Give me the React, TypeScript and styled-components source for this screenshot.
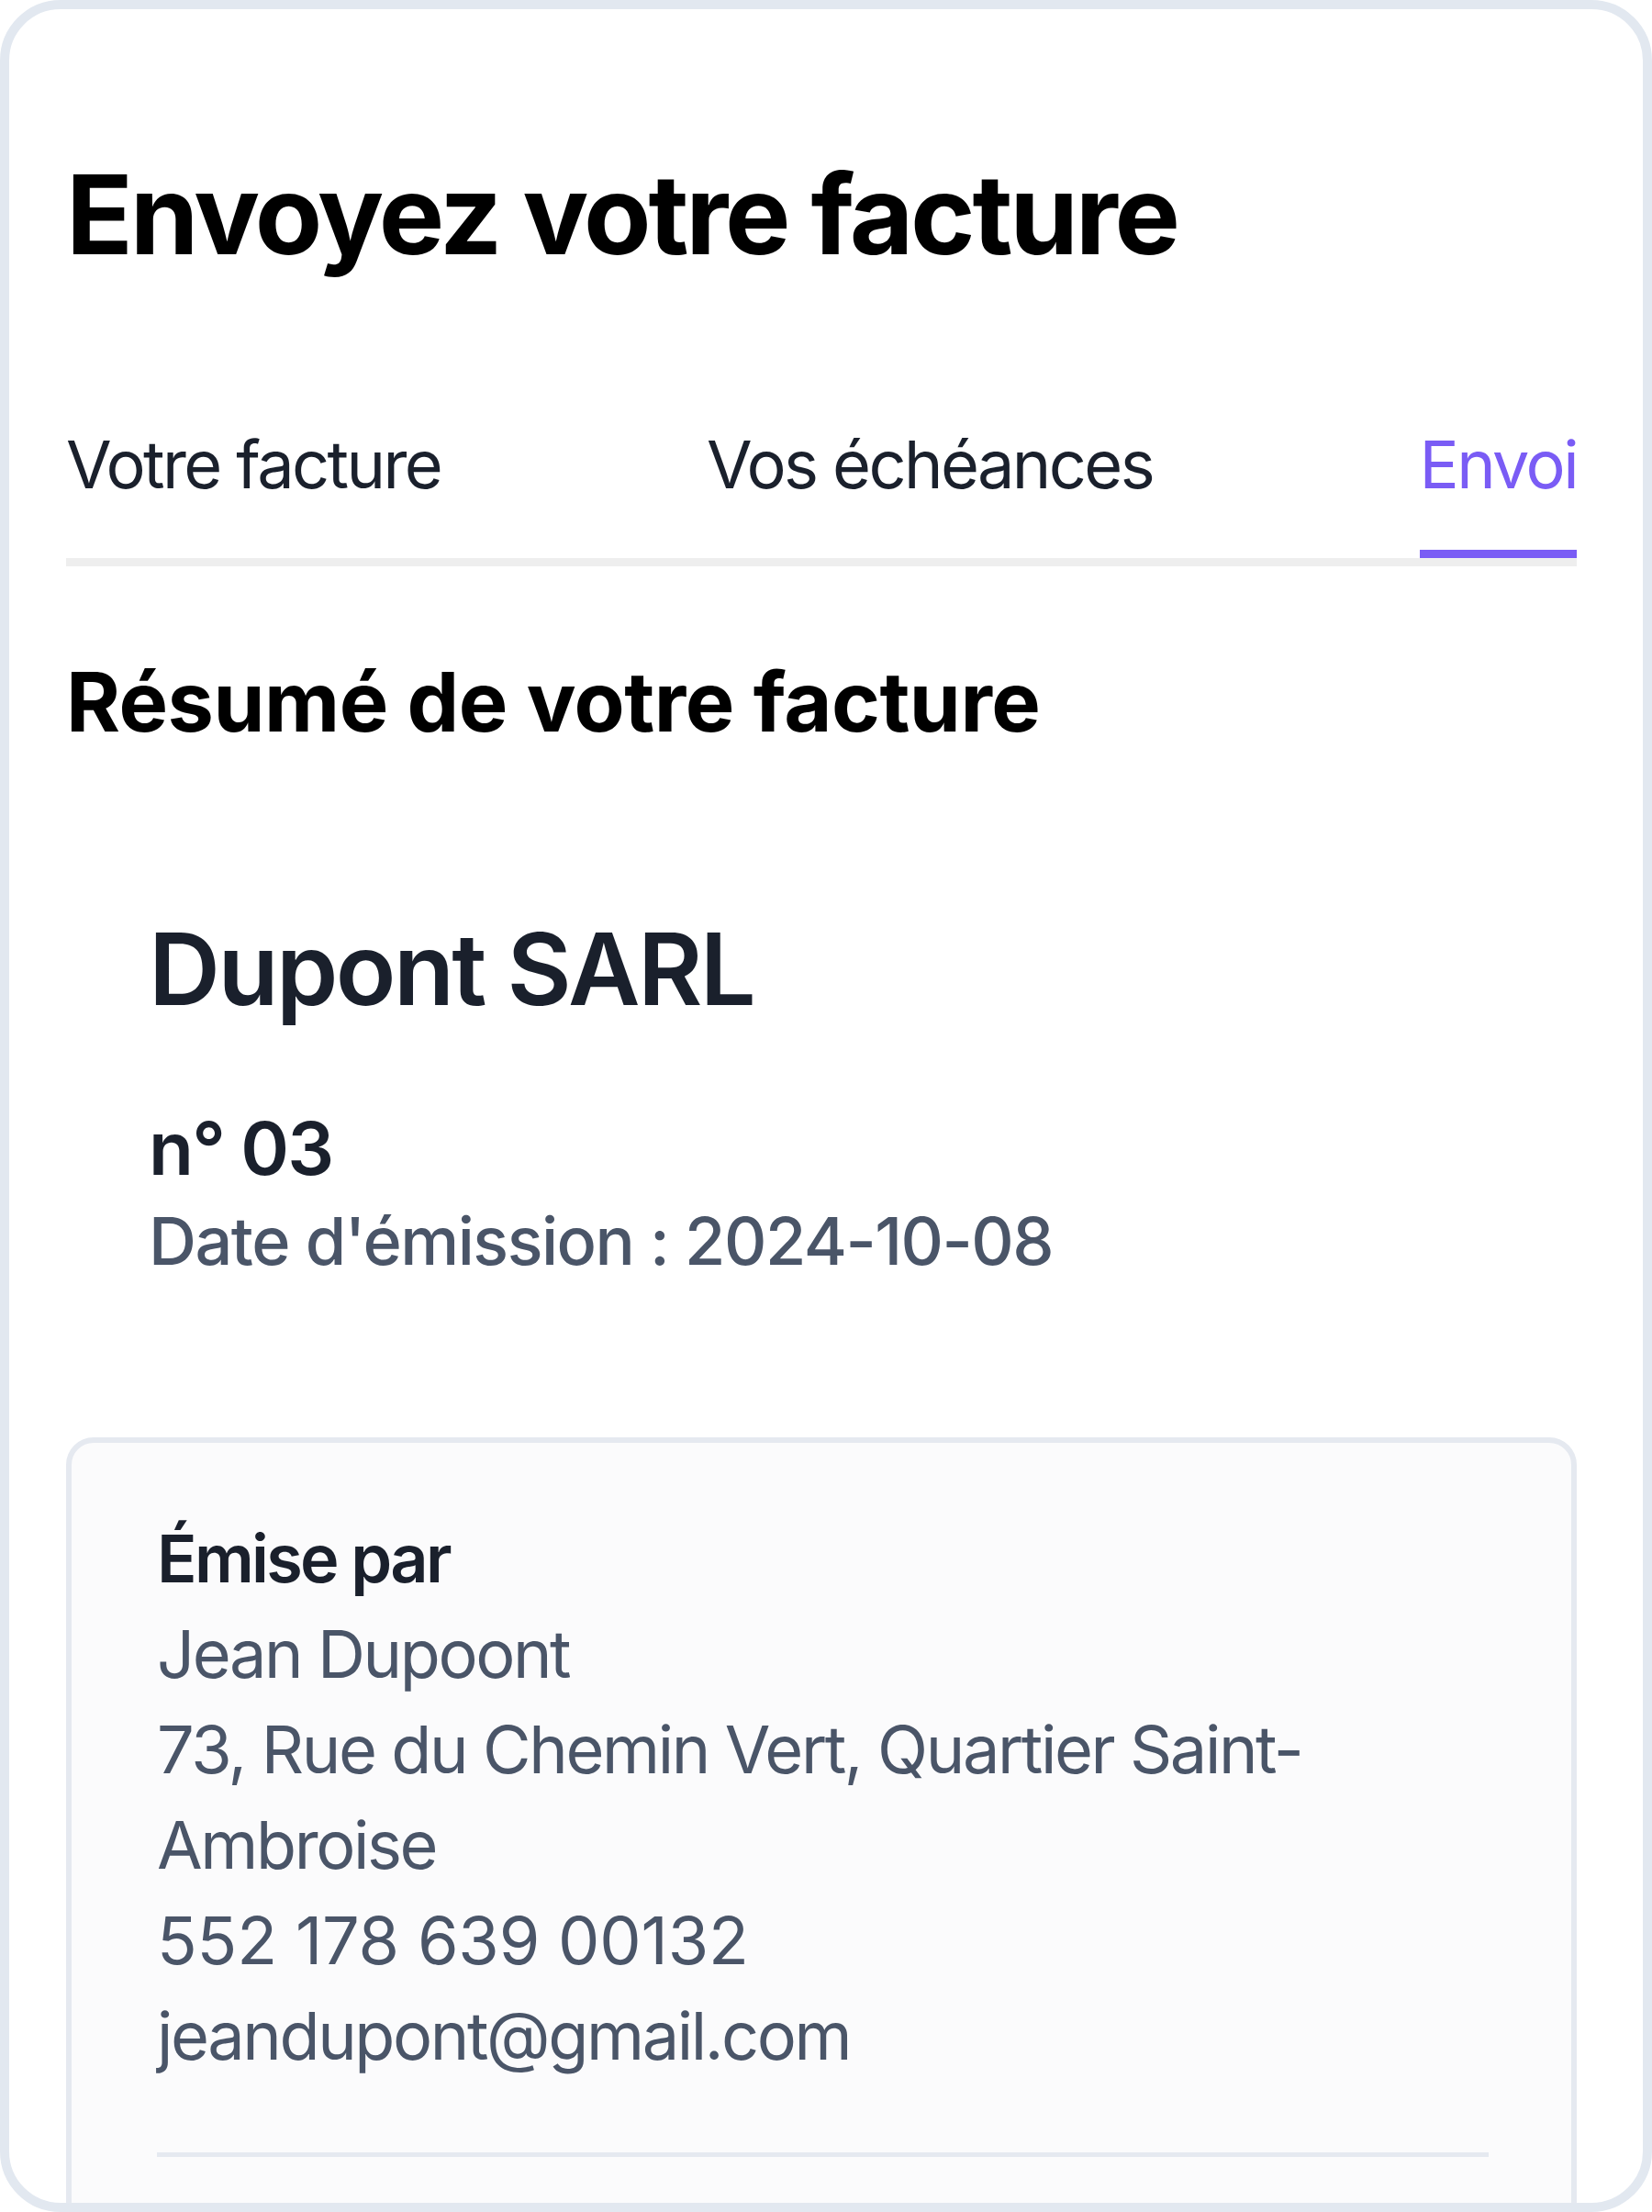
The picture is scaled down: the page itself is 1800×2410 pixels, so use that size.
import React from "react";
import styled, { createGlobalStyle } from "styled-components";

const GlobalStyle = createGlobalStyle`
  html, body {
    margin: 0;
    padding: 0;
    background: #ffffff;
  }
  body {
    font-family: Inter, "Noto Sans", "Liberation Sans", sans-serif;
    -webkit-font-smoothing: antialiased;
  }
  * { box-sizing: border-box; }
`;

const Frame = styled.div`
  width: 1800px;
  height: 2410px;
  border: 10px solid #e2e8f0;
  border-radius: 66px;
  background: #ffffff;
  overflow: hidden;
  padding: 152px 72px 0 62px;
  display: flex;
  flex-direction: column;
`;

const Title = styled.h1`
  margin: 0;
  font-size: 120px;
  line-height: 1.2;
  font-weight: 700;
  color: #000000;
  letter-spacing: -3.2px;
`;

const TabList = styled.nav`
  margin-top: 157px;
  display: grid;
  grid-template-columns: 698px 1fr auto;
  align-items: end;
  border-bottom: 9px solid #eeeeee;
`;

const Tab = styled.div<{ $active?: boolean }>`
  justify-self: start;
  font-size: 72px;
  line-height: 1.2;
  font-weight: 400;
  color: ${(p) => (p.$active ? "#7a5cf5" : "#1a202c")};
  padding-bottom: 50px;
  border-bottom: 9px solid ${(p) => (p.$active ? "#7a5cf5" : "transparent")};
  white-space: nowrap;
  letter-spacing: -2.6px;
`;

const SectionTitle = styled.h2`
  margin: 94px 0 0 0;
  font-size: 90px;
  line-height: 1.2;
  font-weight: 700;
  color: #000000;
  letter-spacing: -0.5px;
`;

const Summary = styled.section`
  margin-top: 172px;
  padding-left: 90px;
  display: flex;
  flex-direction: column;
`;

const Company = styled.div`
  font-size: 108px;
  line-height: 1.2;
  font-weight: 600;
  color: #1a202c;
  letter-spacing: -2.6px;
`;

const InvoiceNumber = styled.div`
  margin-top: 82px;
  font-size: 80px;
  line-height: 1.2;
  font-weight: 600;
  color: #1a202c;
  letter-spacing: -1.8px;
`;

const IssueDate = styled.div`
  margin-top: 10px;
  font-size: 72px;
  line-height: 1.2;
  font-weight: 500;
  color: #4a5568;
  letter-spacing: -1.5px;
`;

const Card = styled.div`
  margin-top: 171px;
  border: 6px solid #e5e9f0;
  border-radius: 30px;
  background: #fbfbfc;
  padding: 74px 90px 120px 93px;
  display: flex;
  flex-direction: column;
`;

const CardLabel = styled.div`
  font-size: 72px;
  line-height: 104px;
  font-weight: 600;
  color: #1a202c;
  letter-spacing: -2.7px;
`;

const CardLine = styled.div<{ $numeric?: boolean }>`
  font-size: 72px;
  line-height: 104px;
  font-weight: 400;
  color: #4a5568;
  letter-spacing: ${(p) => (p.$numeric ? "-0.2px" : "-2.4px")};
`;

const Divider = styled.hr`
  margin: 75px 0 0 0;
  border: none;
  height: 5px;
  background: #e5e9f0;
`;

export default function App() {
  return (
    <>
      <GlobalStyle />
      <Frame>
        <Title>Envoyez votre facture</Title>
        <TabList>
          <Tab>Votre facture</Tab>
          <Tab>Vos échéances</Tab>
          <Tab $active>Envoi</Tab>
        </TabList>
        <SectionTitle>Résumé de votre facture</SectionTitle>
        <Summary>
          <Company>Dupont SARL</Company>
          <InvoiceNumber>n° 03</InvoiceNumber>
          <IssueDate>Date d'émission : 2024-10-08</IssueDate>
        </Summary>
        <Card>
          <CardLabel>Émise par</CardLabel>
          <CardLine>Jean Dupoont</CardLine>
          <CardLine>73, Rue du Chemin Vert, Quartier Saint-Ambroise</CardLine>
          <CardLine $numeric>552 178 639 00132</CardLine>
          <CardLine>jeandupont@gmail.com</CardLine>
          <Divider />
        </Card>
      </Frame>
    </>
  );
}
